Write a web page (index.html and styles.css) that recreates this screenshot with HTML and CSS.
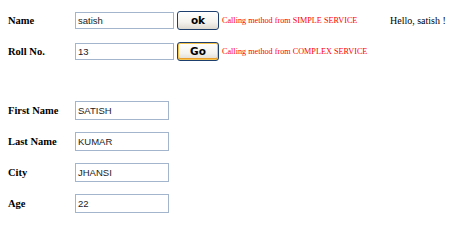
FILE: index.html
```html
<!DOCTYPE html>
<html>
<head>
<meta charset="utf-8">
<link rel="stylesheet" href="styles.css">
</head>
<body>
<div class="page">
  <div class="svc">
    <div class="row">
      <span class="label">Name</span>
      <span class="field wide">satish</span>
      <span class="btn">ok</span>
      <span class="msg">Calling method from SIMPLE SERVICE</span>
      <span class="hello">Hello, satish !</span>
    </div>
    <div class="row">
      <span class="label">Roll No.</span>
      <span class="field wide">13</span>
      <span class="btn default">Go</span>
      <span class="msg">Calling method from COMPLEX SERVICE</span>
    </div>
  </div>
  <div class="details">
    <div class="row">
      <span class="label">First Name</span>
      <span class="field narrow">SATISH</span>
    </div>
    <div class="row">
      <span class="label">Last Name</span>
      <span class="field narrow">KUMAR</span>
    </div>
    <div class="row">
      <span class="label">City</span>
      <span class="field narrow">JHANSI</span>
    </div>
    <div class="row">
      <span class="label">Age</span>
      <span class="field narrow">22</span>
    </div>
  </div>
</div>
</body>
</html>
```
FILE: styles.css
```css
html, body {
  margin: 0;
  padding: 0;
  background: #ffffff;
}
body {
  padding: 8px;
  font-family: "Liberation Serif", "Times New Roman", serif;
  color: #000;
}
.page {
  display: flex;
  flex-direction: column;
  padding-top: 3px;
  gap: 40px;
}
.svc, .details {
  display: flex;
  flex-direction: column;
  gap: 12px;
}
.row {
  display: flex;
  align-items: center;
  height: 19px;
}
.label {
  width: 67px;
  flex: none;
  font-weight: bold;
  font-size: 10.5px;
}
.field {
  box-sizing: border-box;
  border: 1px solid #a2b5cc;
  background: #fff;
  font-family: "Liberation Sans", Arial, sans-serif;
  font-size: 9.5px;
  line-height: 15px;
  padding: 0 2px;
  color: #222;
  flex: none;
}
.wide {
  width: 99px;
  height: 17px;
}
.narrow {
  width: 94px;
  height: 19px;
  line-height: 17px;
}
.btn {
  box-sizing: border-box;
  width: 42px;
  height: 19px;
  margin-left: 3px;
  border: 1px solid #1c3f6e;
  border-radius: 3px;
  background: linear-gradient(#ffffff, #f4f3ee 60%, #dcd9cf);
  font-family: "DejaVu Sans", Verdana, sans-serif;
  font-weight: bold;
  font-size: 10.5px;
  line-height: 17px;
  text-align: center;
  flex: none;
}
.btn.default {
  box-shadow: inset 0 0 0 1px #f5c44f, inset 0 -1px 0 1px #e99d2a;
}
.msg {
  margin-left: 3px;
  width: 168px;
  flex: none;
  color: #ff0000;
  font-size: 8.2px;
  white-space: nowrap;
}
.hello {
  font-size: 10px;
  white-space: nowrap;
}
```
